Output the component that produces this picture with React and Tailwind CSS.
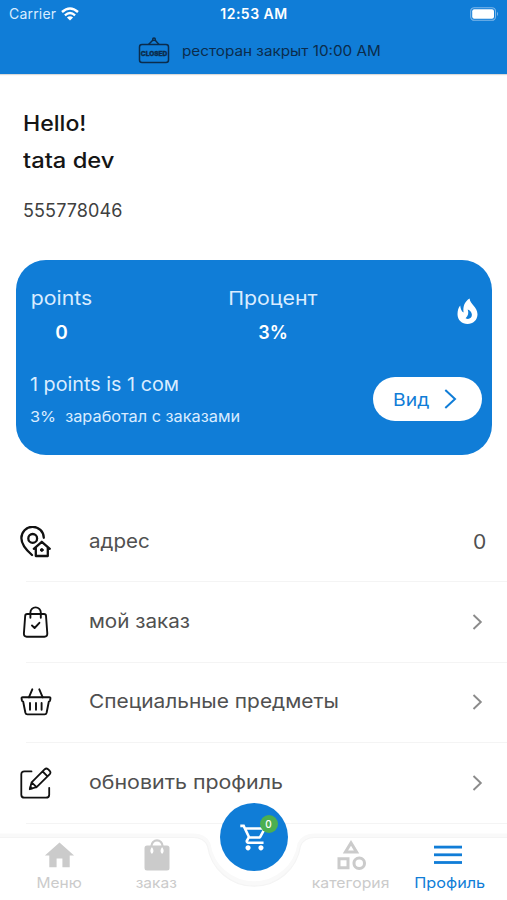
import React from "react";
import { MdHome, MdOutlineShoppingCart, MdOutlineCategory } from "react-icons/md";

function StatusBar() {
  return (
    <div className="flex h-[27px] items-center justify-between pl-[9px] pr-2 text-white">
      <div className="flex w-[160px] items-center gap-[5px]">
        <span className="text-[14px] leading-none tracking-[0.2px] text-[#d9ecff]">Carrier</span>
        <svg className="h-[14px] w-[18px]" viewBox="0 0 18 14" fill="none" stroke="currentColor">
          <path d="M1 5 Q9 -2.2 17 5" strokeWidth="2.4" />
          <path d="M3.9 8.3 Q9 3.8 14.1 8.3" strokeWidth="2.3" />
          <path d="M9 13.6 L5.9 10.6 Q9 8 12.1 10.6 Z" fill="currentColor" stroke="none" />
        </svg>
      </div>
      <span className="text-[14px] leading-none font-semibold tracking-[0.5px]">12:53 AM</span>
      <div className="flex w-[160px] justify-end">
        <svg className="h-[14px] w-[29px]" viewBox="0 0 29 14" fill="none">
          <rect x="0.7" y="0.7" width="24.8" height="12.6" rx="3.6" stroke="#7fb8ea" strokeWidth="1.1" />
          <rect x="2.2" y="2.2" width="21.8" height="9.6" rx="2" fill="white" />
          <path d="M27 4.8 Q29 7 27 9.2 Z" fill="#7fb8ea" />
        </svg>
      </div>
    </div>
  );
}

function ClosedBanner() {
  return (
    <div className="flex h-[47px] items-center pl-[138px] text-[#0b2c4c]">
      <svg className="h-[27px] w-[32px] shrink-0 overflow-visible" viewBox="0 0 32 27" fill="none" stroke="currentColor" strokeWidth="1.5">
        <rect x="1.5" y="7.5" width="29" height="18" rx="2.5" />
        <path d="M10.5 7.5 L15 3 M21 7.5 L17 3" />
        <circle cx="16" cy="2.3" r="1.3" />
        <text x="2.8" y="19" textLength="26.4" lengthAdjust="spacingAndGlyphs" fontSize="6.5" fontWeight="800" fill="currentColor" strokeWidth="0.4">CLOSED</text>
      </svg>
      <span className="ml-3 origin-left scale-x-[1.09] whitespace-nowrap text-[14px] leading-none">ресторан закрыт 10:00 AM</span>
    </div>
  );
}

function FlameIcon() {
  return (
    <svg className="mt-[9px] mr-[4px] ml-auto h-[27px] w-[21px] text-white" viewBox="0 0 21 27" fill="currentColor">
      <path
        fillRule="evenodd"
        d="M12.6 0.4 C12.9 6 20.5 9 20.5 16.2 C20.5 22 16 26 10.5 26 C5 26 0.5 22 0.5 16.2 C0.5 12.4 1.4 9.6 3.2 7.4 C3.6 10.2 4.4 13.4 6.6 14.4 C5.6 8 8 3 12.6 0.4 Z M10.7 11.6 C11.9 15 11.3 18 8.6 20.2 C11.4 22 15 20.2 14.9 16.8 C14.8 14.2 13 12.6 10.7 11.6 Z"
      />
    </svg>
  );
}

function PointsCard() {
  return (
    <section className="mx-[15.5px] mt-[38px] flex h-[195px] flex-col rounded-[30px] bg-[#107dd7] pl-[14.5px] pr-[10px] text-[#d9ecff]">
      <div className="flex h-[94px] pt-[29px]">
        <div className="flex w-[63px] flex-col items-center">
          <span className="scale-x-[1.12] whitespace-nowrap text-[19px] leading-5">points</span>
          <span className="mt-[14px] text-[19px] leading-5 font-semibold text-white">0</span>
        </div>
        <div className="ml-[113px] flex w-[134px] flex-col items-center">
          <span className="scale-x-[1.12] whitespace-nowrap text-[19px] leading-5">Процент</span>
          <span className="mt-[14px] text-[18px] leading-5 font-semibold text-white">3%</span>
        </div>
        <FlameIcon />
      </div>
      <div className="flex justify-between pt-[20px]">
        <div className="flex flex-col items-start pt-px">
          <span className="origin-left scale-x-[1.04] whitespace-nowrap text-[19px] leading-5">1 points is 1 сом</span>
          <span className="mt-[12px] origin-left scale-x-[1.085] whitespace-pre text-[15px] leading-5">3%  заработал с заказами</span>
        </div>
        <button className="mt-[3px] flex h-[44px] w-[109px] items-center rounded-full bg-white pl-5 text-[#107dd7]">
          <span className="flex w-[51px] pt-px">
            <span className="origin-left scale-x-[1.14] text-[17px] leading-5">Вид</span>
          </span>
          <svg className="h-[20px] w-[13px]" viewBox="0 0 13 20" fill="none" stroke="currentColor" strokeWidth="2">
            <path d="M1.3 1 L11 10 L1.3 19" />
          </svg>
        </button>
      </div>
    </section>
  );
}

function AddressIcon() {
  return (
    <svg className="size-8" viewBox="0 0 32 32" fill="none" stroke="currentColor" strokeWidth="2.3" strokeLinecap="round" strokeLinejoin="round">
      <path d="M12 29 C8 25.5 1.4 18.3 1.4 12.2 A11.2 11.2 0 0 1 23.8 11.8" />
      <circle cx="12.7" cy="12.4" r="4.4" />
      <path d="M13.8 22.8 L21.8 15.8 L29.8 22.8 M15.8 21.8 V30 H27.8 V21.8" />
      <circle cx="21.8" cy="24" r="1.4" fill="currentColor" strokeWidth="1" />
    </svg>
  );
}

function OrderIcon() {
  return (
    <svg className="size-8" viewBox="0 0 32 32" fill="none" stroke="currentColor" strokeWidth="1.9" strokeLinecap="round" strokeLinejoin="round">
      <path d="M7.2 8 H24 Q25.9 8 26 9.8 L27.3 27.5 Q27.4 30.7 24.5 30.7 H6.7 Q3.8 30.7 3.9 27.5 L5.2 9.8 Q5.3 8 7.2 8 Z" />
      <path d="M10.4 11.7 V6.6 A5.2 5.2 0 0 1 20.8 6.6 V11.7" />
      <path d="M12 19.5 L14.6 22 L19.4 16.8" />
    </svg>
  );
}

function BasketIcon() {
  return (
    <svg className="size-8" viewBox="0 0 32 32" fill="none" stroke="currentColor" strokeWidth="1.9" strokeLinecap="round" strokeLinejoin="round">
      <path d="M2.7 11.3 H29.3 Q30.7 11.3 30.4 12.7 L30.1 14.3 Q29.8 15.6 28.8 15.8 L26.6 26.8 Q26.2 28.4 24.6 28.4 H7.4 Q5.8 28.4 5.4 26.8 L3.2 15.8 Q2.2 15.6 1.9 14.3 L1.6 12.7 Q1.3 11.3 2.7 11.3 Z" />
      <path d="M8.9 11.3 L12.3 3.3 M22.7 11.3 L19.3 3.3 M10 17 V23.8 M16 17 V23.8 M21.6 17 V23.8" />
    </svg>
  );
}

function EditIcon() {
  return (
    <svg className="size-8" viewBox="0 0 32 32" fill="none" stroke="currentColor" strokeWidth="1.8" strokeLinecap="round" strokeLinejoin="round">
      <path d="M11.5 4.4 H4.5 Q1.3 4.4 1.3 7.4 V27.7 Q1.3 30.7 4.5 30.7 H26 Q29.2 30.7 29.2 27.7 V20.8" />
      <path d="M9.8 22 L11.6 15.4 L24.8 2.2 Q26.3 0.9 28 2.2 L29.8 4 Q31.1 5.6 29.8 7.1 L16.6 20.2 Z M11.6 15.4 L16.6 20.2 M22.7 4.5 L27.5 9.3" />
      <path d="M9.5 22.3 L10.4 19 L12.8 21.4 Z" fill="currentColor" strokeWidth="0.8" />
    </svg>
  );
}

function ListRow({ icon, label, labelClass, value }) {
  return (
    <div className="flex h-[79.4px] items-center pl-5">
      <div className="flex w-[69px] shrink-0 text-[#111]">{icon}</div>
      <span className={"mr-auto origin-left whitespace-nowrap text-[19px] leading-6 text-[#505050] " + labelClass}>{label}</span>
      {value !== undefined ? (
        <span className="flex w-[34px]">
          <span className="origin-left scale-x-[1.08] text-[19.5px] leading-6 text-[#505050]">{value}</span>
        </span>
      ) : (
        <svg className="mr-6 h-[16px] w-[11px] text-[#8b8b8b]" viewBox="0 0 11 16" fill="none" stroke="currentColor" strokeWidth="1.9">
          <path d="M1.5 1 L8.8 8 L1.5 15" />
        </svg>
      )}
    </div>
  );
}

function Divider() {
  return <div className="ml-[26px] h-px shrink-0 bg-[#f4f4f4]" />;
}

function NavItem({ icon, label, className, labelClass }) {
  return (
    <div className={"flex flex-col items-center " + className}>
      <div className="flex h-[38px] items-center">{icon}</div>
      <span className={"whitespace-nowrap text-[14.5px] leading-[18px] " + labelClass}>{label}</span>
    </div>
  );
}

function BottomNav() {
  return (
    <nav className="absolute inset-x-0 bottom-0 h-[100px]">
      <svg className="absolute inset-0 h-full w-full" viewBox="0 0 507 100">
        <path d="M-9 36 H193 Q204 36 208 44 A46.5 46.5 0 0 0 300 44 Q304 36 315 36 H516 V110 H-9 Z" fill="white" stroke="#f9f9f9" strokeWidth="5" />
        <path d="M-9 37.5 H193 Q204 37.5 207.5 46 A47 47 0 0 0 300.5 46 Q304 37.5 315 37.5 H516 V110 H-9 Z" fill="white" stroke="#f4f4f4" strokeWidth="1.2" />
      </svg>
      <div className="absolute inset-x-0 bottom-0 flex h-[64px] text-[#cbcbcb]">
        <NavItem className="ml-[10px] w-[98px]" label="Меню" labelClass="scale-x-[1.07]" icon={<MdHome className="size-[35px]" />} />
        <NavItem
          className="w-[97px]"
          label="заказ"
          labelClass="scale-x-[1.07]"
          icon={
            <svg className="h-[32px] w-[26px]" viewBox="0 0 26 32">
              <path d="M7.5 9 V6.8 A5.5 5.5 0 0 1 18.5 6.8 V9" fill="none" stroke="currentColor" strokeWidth="2.2" />
              <rect x="0.5" y="6.5" width="25" height="25" rx="2.5" fill="currentColor" />
              <path d="M7.9 9 Q9.8 12 7.9 14 Q6 12 7.9 9 Z M18.1 9 Q20 12 18.1 14 Q16.2 12 18.1 9 Z" fill="white" stroke="white" strokeWidth="1.2" strokeLinejoin="round" />
            </svg>
          }
        />
        <NavItem className="ml-[97px] w-[97px]" label="категория" labelClass="scale-x-[1.09]" icon={<MdOutlineCategory className="size-[36px]" />} />
        <NavItem
          className="w-[102px] text-[#107dd7]"
          label="Профиль"
          labelClass="scale-x-[1.12]"
          icon={
            <svg className="mr-[4px] h-[20px] w-[28px]" viewBox="0 0 28 20" fill="currentColor">
              <rect y="0.7" width="28" height="2.8" />
              <rect y="8.4" width="28" height="2.8" />
              <rect y="16.1" width="28" height="2.8" />
            </svg>
          }
        />
      </div>
      <button className="absolute left-[220px] top-[3px] flex size-[68px] items-center justify-center rounded-full bg-[#107dd7] text-white">
        <MdOutlineShoppingCart className="size-[31px]" />
        <span className="absolute left-[39.5px] top-[12px] flex size-[18px] items-center justify-center rounded-full bg-[#4caf50] text-[10px] leading-none font-medium">0</span>
      </button>
    </nav>
  );
}

export default function App() {
  return (
    <div className="relative h-[900px] w-[507px] overflow-hidden bg-white font-['Inter','Noto_Sans',sans-serif]">
      <header className="h-[74px] bg-[#107dd7] shadow-[0_1px_1px_rgba(0,0,0,0.15)]">
        <StatusBar />
        <ClosedBanner />
      </header>
      <section className="flex flex-col items-start pl-[23px] pt-[38px]">
        <span className="origin-left scale-x-[1.1] text-[21px] leading-6 font-medium text-[#151515]">Hello!</span>
        <span className="mt-[13px] origin-left scale-x-[1.13] text-[21px] leading-6 font-medium text-[#151515]">tata dev</span>
        <span className="mt-[27px] text-[18px] leading-[22px] tracking-[0.1px] text-[#404040]">555778046</span>
      </section>
      <PointsCard />
      <main className="mt-[47px] flex flex-col">
        <ListRow icon={<AddressIcon />} label="адрес" labelClass="scale-x-[1.08]" value="0" />
        <Divider />
        <ListRow icon={<OrderIcon />} label="мой заказ" labelClass="scale-x-[1.085]" />
        <Divider />
        <ListRow icon={<BasketIcon />} label="Специальные предметы" labelClass="scale-x-[1.1]" />
        <Divider />
        <ListRow icon={<EditIcon />} label="обновить профиль" labelClass="scale-x-[1.125]" />
        <Divider />
      </main>
      <BottomNav />
    </div>
  );
}
